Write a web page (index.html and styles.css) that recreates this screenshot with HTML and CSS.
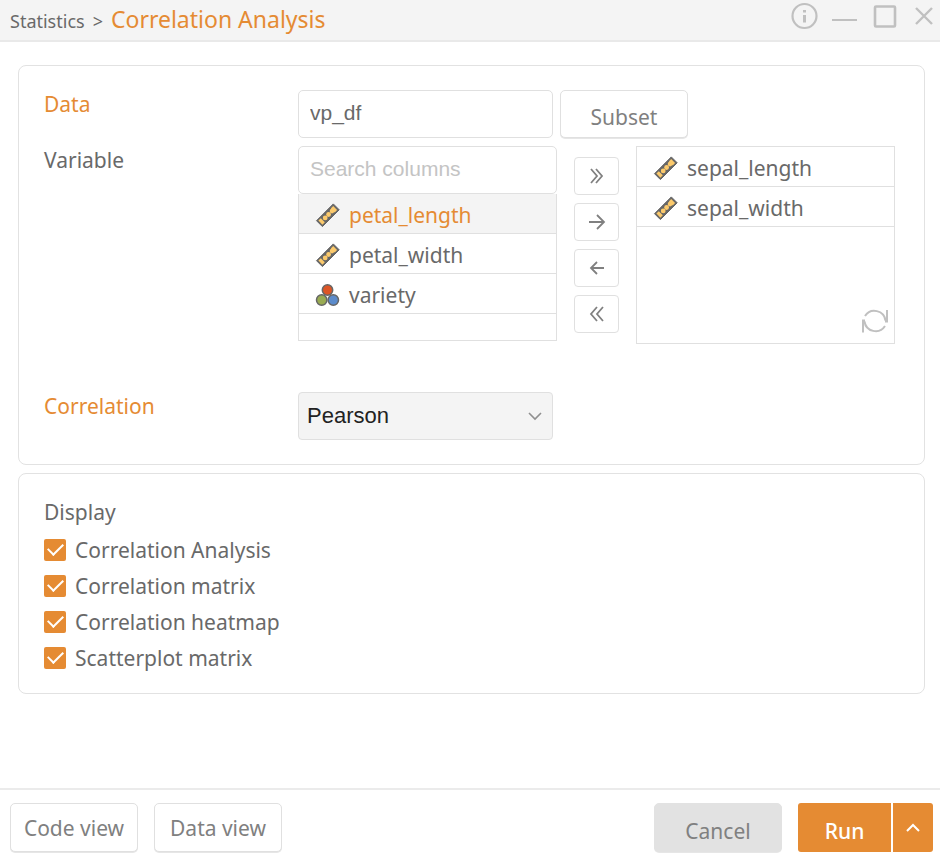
FILE: index.html
```html
<!DOCTYPE html>
<html lang="en">
<head>
<meta charset="utf-8">
<title>Correlation Analysis</title>
<link rel="stylesheet" href="styles.css">
</head>
<body>
<svg class="defs" aria-hidden="true">
  <symbol id="ruler" viewBox="0 0 26 26">
    <path d="M1.500 18.700 18.300 1.900 24.200 7.800 7.400 24.600Z" fill="#666" stroke="#666" stroke-width="1"/>
    <g fill="#fcca6c"><path d="m3.400 18.600 2.400-2.400 4 4-2.400 2.600z"/><circle cx="10.200" cy="15.900" r="2.400"/><circle cx="13.600" cy="12.500" r="2.400"/><circle cx="17" cy="9.100" r="2.300"/><path d="m18.200 4.100 3.900 3.900-2.400 2.400-3.900-3.900z"/></g>
  </symbol>
  <symbol id="category" viewBox="0 0 26 26">
    <g stroke="#666" stroke-width="1.5"><circle cx="12.500" cy="8" r="5.200" fill="#dd5525"/><circle cx="6.700" cy="18" r="5.200" fill="#99ab52"/><circle cx="18.300" cy="18" r="5.200" fill="#5b8bcb"/></g>
  </symbol>
</svg>
<header class="titlebar">
  <h1 class="crumbs"><span class="parent">Statistics</span><span class="separator">&gt;</span><span class="current">Correlation Analysis</span></h1>
  <div class="window-controls">
    <button type="button" aria-label="Information"><svg width="28" height="28" viewBox="0 0 28 28"><circle cx="14.500" cy="14" r="12" stroke-width="2.2"/><path d="M14.500 8v2.400M14.500 13v7.500" stroke-width="3"/></svg></button>
    <button type="button" aria-label="Minimize"><svg width="28" height="28" viewBox="0 0 28 28"><path d="M2 18h25" stroke-width="2"/></svg></button>
    <button type="button" aria-label="Maximize"><svg width="28" height="28" viewBox="0 0 28 28"><rect x="5" y="4.500" width="20" height="20" rx="1" stroke-width="2.600"/></svg></button>
    <button type="button" aria-label="Close"><svg width="28" height="28" viewBox="0 0 28 28"><path d="m6 6 16 16M22 6 6 22" stroke-width="2.400"/></svg></button>
  </div>
</header>
<main class="content">
  <section class="panel settings">
    <label class="name required" for="data">Data</label>
    <div class="data-field">
      <input class="field" id="data" type="text" value="vp_df">
      <button class="button" type="button">Subset</button>
    </div>
    <label class="name" for="search">Variable</label>
    <div class="picker">
      <div class="source">
        <input class="field" id="search" type="text" placeholder="Search columns">
        <ul class="columns" role="listbox" aria-label="Available columns">
          <li class="selected" role="option" aria-selected="true"><svg class="kind"><use href="#ruler"/></svg>petal_length</li>
          <li role="option"><svg class="kind"><use href="#ruler"/></svg>petal_width</li>
          <li role="option"><svg class="kind"><use href="#category"/></svg>variety</li>
        </ul>
      </div>
      <div class="moves">
        <button type="button" aria-label="Add all"><svg width="20" height="20" viewBox="0 0 20 20"><path d="m4 3 6 7-6 7M9 3l6 7-6 7"/></svg></button>
        <button type="button" aria-label="Add"><svg width="20" height="20" viewBox="0 0 20 20"><path d="M2 10h15M10 3l7 7-7 7"/></svg></button>
        <button type="button" aria-label="Remove"><svg width="20" height="20" viewBox="0 0 20 20"><path d="M17 10H4M10 4l-6 6 6 6"/></svg></button>
        <button type="button" aria-label="Remove all"><svg width="20" height="20" viewBox="0 0 20 20"><path d="m10 3-6 7 6 7M16 3l-6 7 6 7"/></svg></button>
      </div>
      <div class="target">
        <ul class="columns" role="listbox" aria-label="Chosen columns">
          <li role="option"><svg class="kind"><use href="#ruler"/></svg>sepal_length</li>
          <li role="option"><svg class="kind"><use href="#ruler"/></svg>sepal_width</li>
        </ul>
        <button class="refresh" type="button" aria-label="Refresh"><svg width="26" height="26" viewBox="0 0 26 26"><path d="M3 8A11.200 11.200 0 0 1 23.500 12.500M25 2v11.500h-2M23 18A11.200 11.200 0 0 1 2.500 13.500M1 24.500V12.500h2"/></svg></button>
      </div>
    </div>
    <label class="name required" for="method">Correlation</label>
    <div class="select">
      <select id="method"><option>Pearson</option><option>Spearman</option><option>Kendall</option></select>
      <svg width="14" height="10" viewBox="0 0 14 10"><path d="m1 2 6 6 6-6"/></svg>
    </div>
  </section>
  <fieldset class="panel display">
    <legend>Display</legend>
    <label><input type="checkbox" checked>Correlation Analysis</label>
    <label><input type="checkbox" checked>Correlation matrix</label>
    <label><input type="checkbox" checked>Correlation heatmap</label>
    <label><input type="checkbox" checked>Scatterplot matrix</label>
  </fieldset>
</main>
<footer class="actions">
  <button class="button" type="button">Code view</button>
  <button class="button" type="button">Data view</button>
  <button class="button cancel" type="button">Cancel</button>
  <div class="run">
    <button type="button">Run</button>
    <button type="button" aria-label="More run options"><svg width="16" height="10" viewBox="0 0 16 10"><path d="m2 8 6-6 6 6"/></svg></button>
  </div>
</footer>
</body>
</html>
```

FILE: styles.css
```css
* { box-sizing: border-box; }

body {
  margin: 0;
  min-height: 100vh;
  display: flex;
  flex-direction: column;
  background: #fff;
  color: #696969;
  font: 21px/28px "Noto Sans", "Open Sans", sans-serif;
}

button {
  font: inherit;
  color: inherit;
  padding: 0;
  border: 0;
  background: none;
}

svg { fill: none; stroke: currentColor; display: block; }
.defs { position: absolute; width: 0; height: 0; }

.titlebar {
  display: flex;
  justify-content: space-between;
  height: 42px;
  padding: 0 2px 0 10px;
  background: #f4f4f4;
  border-bottom: 2px solid #e9e9e9;
}
.crumbs {
  display: flex;
  align-items: baseline;
  gap: 8px;
  margin: 0;
  font-weight: 400;
  line-height: 38px;
}
.parent { font-size: 18px; }
.separator { font-size: 18px; }
.current { font-size: 23px; color: #e58b33; }
.window-controls { display: flex; gap: 12px; height: 32px; align-items: center; color: #c0c0c0; }

.content { padding: 23px 15px 0 18px; }
.panel {
  margin: 0 0 8px;
  border: 1px solid #e2e2e2;
  border-radius: 8px;
}

.settings {
  display: grid;
  grid-template-columns: 254px minmax(0, 1fr);
  row-gap: 8px;
  padding: 24px 29px 24px 25px;
}
.name { justify-self: start; }
.required { color: #e58b33; }

.field {
  display: block;
  width: 100%;
  height: 48px;
  padding: 0 11px 2px;
  border: 1px solid #e0e0e0;
  border-radius: 5px;
  background: #fff;
  color: #696969;
  font: 21px "Liberation Sans", sans-serif;
}
.field::placeholder { color: #c4c4c4; opacity: 1; }

.data-field { display: flex; gap: 7px; }
.data-field .field { width: 255px; }

.button {
  width: 128px;
  height: 49px;
  border: 1px solid #e0e0e0;
  border-radius: 5px;
  background: #fff;
  box-shadow: 0 1px #e6e6e6;
  color: #808080;
}
.data-field .button { height: 48px; padding-top: 6px; }

.picker {
  display: grid;
  grid-template-columns: minmax(0, 1fr) 45px minmax(0, 1fr);
  column-gap: 17px;
  height: 238px;
  align-items: start;
}
.columns { margin: 0; padding: 0; list-style: none; }
.columns li {
  display: flex;
  align-items: center;
  gap: 8px;
  height: 40px;
  padding: 2px 16px 0;
  border-bottom: 1px solid #e0e0e0;
}
.columns .selected { background: #f4f4f4; color: #e58b33; }
.kind { width: 26px; height: 26px; stroke: none; }
.source .columns { height: 147px; border: 1px solid #e0e0e0; border-top: 0; }

.moves { display: grid; gap: 8px; padding-top: 11px; }
.moves button {
  display: grid;
  place-items: center;
  height: 38px;
  border: 1px solid #e0e0e0;
  border-radius: 4px;
  color: #808080;
}
.moves svg { stroke-width: 1.8; }

.target { position: relative; height: 198px; border: 1px solid #e0e0e0; }
.refresh { position: absolute; right: 6px; bottom: 9px; color: #c0c0c0; }
.refresh svg { stroke-width: 2; }

.select { position: relative; width: 255px; }
.select select {
  appearance: none;
  width: 100%;
  height: 48px;
  padding: 0 32px 2px 8px;
  border: 1px solid #e0e0e0;
  border-radius: 4px;
  background: #f4f4f4;
  color: #222;
  font: 22px "Liberation Sans", sans-serif;
}
.select svg { position: absolute; right: 11px; top: 19px; color: #909090; stroke-width: 1.6; pointer-events: none; }

.display { display: flex; flex-direction: column; min-width: 0; padding: 24px 25px 17px; }
.display legend { float: left; padding: 0; height: 34px; line-height: 28px; }
.display label { display: flex; align-items: center; gap: 9px; height: 36px; }
.display input {
  appearance: none;
  width: 22px;
  height: 22px;
  margin: 0;
  border-radius: 2px;
  background: #e58b33;
  display: grid;
  place-items: center;
}
.display input:checked::before {
  content: "";
  width: 13px;
  height: 7px;
  border: solid #fff;
  border-width: 0 0 2px 2px;
  transform: translateY(-3px) rotate(-45deg);
}

.actions {
  display: flex;
  gap: 16px;
  margin-top: auto;
  padding: 13px 7px 8px 10px;
  border-top: 2px solid #ebebeb;
}
.actions .cancel { margin-left: auto; padding-top: 6px; background: #e2e2e2; border-color: #e2e2e2; }
.run { display: flex; gap: 2px; height: 49px; color: #fff; }
.run button { background: #e58b33; border-radius: 3px 0 0 3px; width: 93px; padding-top: 6px; font-weight: 500; }
.run button + button { width: 40px; padding: 0; display: grid; place-items: center; border-radius: 0 3px 3px 0; }
.run svg { stroke-width: 2; }
```
